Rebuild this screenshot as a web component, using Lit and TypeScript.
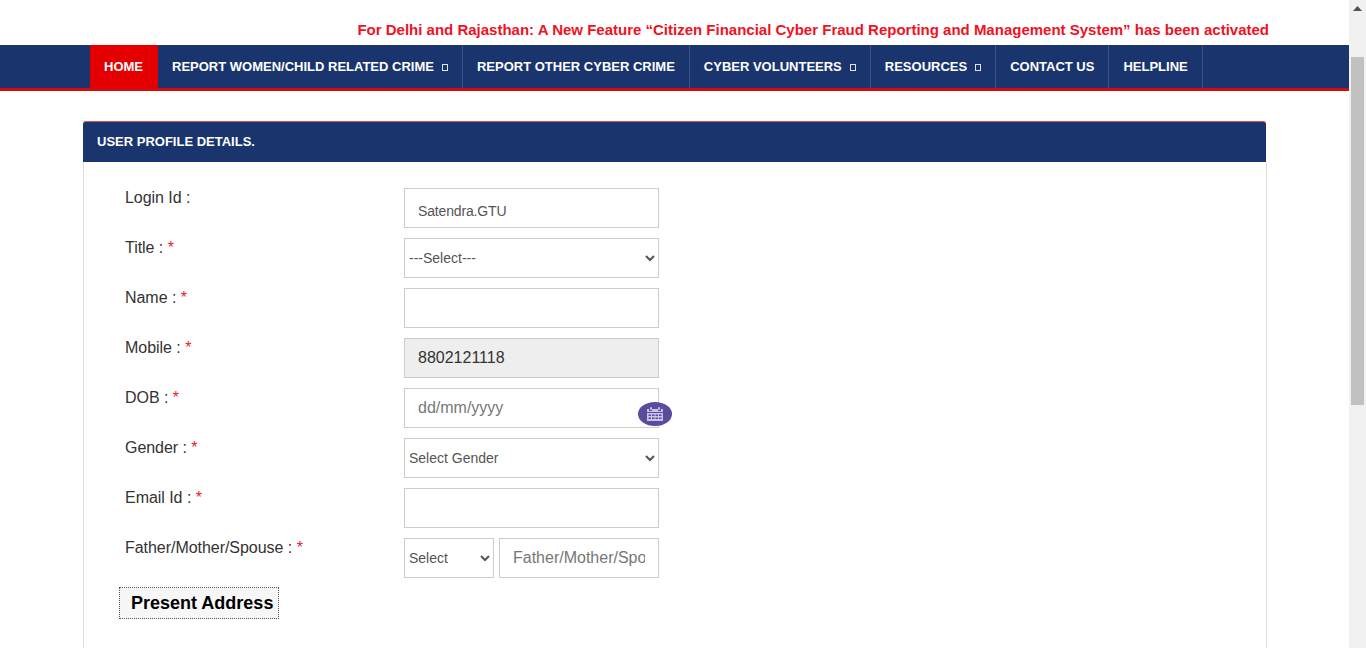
import { LitElement, html, css } from "lit";
import { customElement } from "lit/decorators.js";

const rows: { label: string; req: boolean; kind: string; value?: string; ph?: string }[] = [
  { label: "Login Id :", req: false, kind: "login", value: "Satendra.GTU" },
  { label: "Title :", req: true, kind: "select", value: "---Select---" },
  { label: "Name :", req: true, kind: "input" },
  { label: "Mobile :", req: true, kind: "disabled", value: "8802121118" },
  { label: "DOB :", req: true, kind: "date", ph: "dd/mm/yyyy" },
  { label: "Gender :", req: true, kind: "select", value: "Select Gender" },
  { label: "Email Id :", req: true, kind: "input" },
  { label: "Father/Mother/Spouse :", req: true, kind: "pair" },
];

const nav = [
  { t: "HOME", active: true },
  { t: "REPORT WOMEN/CHILD RELATED CRIME", caret: true },
  { t: "REPORT OTHER CYBER CRIME" },
  { t: "CYBER VOLUNTEERS", caret: true },
  { t: "RESOURCES", caret: true },
  { t: "CONTACT US" },
  { t: "HELPLINE" },
];

@customElement("app-root")
export class AppRoot extends LitElement {
  static styles = css`
    :host { display: flex; width: 1366px; height: 648px; overflow: hidden; background: #fff;
      font-family: "Liberation Sans", Arial, sans-serif; color: #333; }
    .page { width: 1349px; flex: none; }
    .scrollbar { width: 17px; flex: none; background: #f1f1f1; display: flex; flex-direction: column; align-items: center; }
    .arrow { height: 17px; width: 17px; display: flex; align-items: center; justify-content: center; }
    .thumb { width: 13px; height: 348px; margin-top: 40px; background: #c1c1c1; }
    .ticker { height: 45px; box-sizing: border-box; padding: 21px 80px 0 0; text-align: right;
      color: #f01124; font-size: 15px; line-height: 18px; font-weight: 700; white-space: nowrap; }
    nav { height: 43px; background: #1a356e; border-bottom: 3px solid #d10c14; padding-left: 90px; display: flex; }
    .item { display: flex; align-items: center; box-sizing: border-box; height: 43px; padding: 0 14px 1px;
      color: #fff; font-size: 13px; font-weight: 700; border-right: 1px solid #3d5482; white-space: nowrap; }
    .item.active { background: #e40000; border-right-color: #e40000; }
    .caret { display: inline-block; box-sizing: border-box; width: 6px; height: 7px; border: 1px solid #dfe4ee; margin-left: 8px; margin-top: 3px; }
    .panel { margin: 30px 0 0 83px; width: 1184px; }
    .head { width: 1183px; height: 41px; box-sizing: border-box; background: #1a356e; border-top: 1px solid #d9534f; border-radius: 3px 3px 0 0;
      display: flex; align-items: center; padding: 0 0 2px 14px; color: #fff; font-size: 13px; font-weight: 700; }
    .body { border: 1px solid #ddd; border-top: none; padding: 26px 0 0 35px; height: 500px; box-sizing: border-box; }
    .row { display: flex; height: 40px; margin-bottom: 10px; }
    .label { width: 285px; padding: 1px 0 0 6px; box-sizing: border-box; font-size: 16px; line-height: 18px; letter-spacing: -0.04px; color: #333; flex: none; }
    .req { color: #e8202a; }
    .ctl { position: relative; width: 255px; height: 40px; }
    input, select { box-sizing: border-box; width: 100%; height: 40px; margin: 0; border: 1px solid #ccc; background: #fff;
      border-radius: 0; font-family: inherit; color: #333; outline: none; }
    input { font-size: 16px; padding: 0 13px; }
    input::placeholder { color: #777; opacity: 1; }
    input.login { font-size: 14px; letter-spacing: -0.15px; padding-top: 6px; color: #555; }
    input.off { background: #eee; }
    select { font-size: 14px; color: #555; padding: 0; }
    .pair { display: flex; gap: 5px; }
    .pair select { width: 90px; flex: none; }
    .pair input { width: 160px; flex: none; }
    .cal { position: absolute; left: 234px; top: 14px; width: 34px; height: 24px; border-radius: 50%; background: #5b4a9e;
      display: flex; align-items: center; justify-content: center; }
    .legend { display: inline-block; box-sizing: border-box; width: 160px; height: 32px; margin: -1px 0 0 0; border: 1px dotted #555; background: #f7f7f7;
      padding-left: 11px; font-size: 18px; line-height: 30px; font-weight: 700; color: #000; }
  `;

  private control(r: (typeof rows)[number]) {
    switch (r.kind) {
      case "login":
        return html`<input class="login" .value=${r.value ?? ""} />`;
      case "select":
        return html`<select><option>${r.value}</option></select>`;
      case "disabled":
        return html`<input class="off" .value=${r.value ?? ""} readonly />`;
      case "date":
        return html`<input placeholder=${r.ph ?? ""} />
          <span class="cal">
            <svg width="18" height="14" viewBox="0 0 18 14" fill="#c9c3e6">
              <rect x="4" y="0" width="2" height="3" rx="1"></rect>
              <rect x="12" y="0" width="2" height="3" rx="1"></rect>
              <path d="M1 2h2v2h3V2h6v2h3V2h2v3H1z"></path>
              <path fill-rule="evenodd" d="M1 6h16v8H1zM2.500 7.500v1.500h2.500V7.500zM6 7.500v1.500h2.500V7.500zM9.500 7.500v1.500H12V7.500zM13 7.500v1.500h2.500V7.500zM2.500 10.500V12h2.500v-1.500zM6 10.500V12h2.500v-1.500zM9.500 10.500V12H12v-1.500zM13 10.500V12h2.500v-1.500z"></path>
            </svg>
          </span>`;
      case "pair":
        return html`<div class="pair"><select><option>Select</option></select><input placeholder="Father/Mother/Spouse" /></div>`;
      default:
        return html`<input />`;
    }
  }

  render() {
    return html`
      <div class="page">
        <div class="ticker">For Delhi and Rajasthan: A New Feature “Citizen Financial Cyber Fraud Reporting and Management System” has been activated</div>
        <nav>
          ${nav.map(
            (n) => html`<div class="item ${n.active ? "active" : ""}">${n.t}${n.caret ? html`<span class="caret"></span>` : ""}</div>`
          )}
        </nav>
        <section class="panel">
          <div class="head">USER PROFILE DETAILS.</div>
          <div class="body">
            ${rows.map(
              (r) => html`<div class="row">
                <div class="label">${r.label}${r.req ? html` <span class="req">*</span>` : ""}</div>
                <div class="ctl">${this.control(r)}</div>
              </div>`
            )}
            <div class="legend">Present Address</div>
          </div>
        </section>
      </div>
      <div class="scrollbar">
        <div class="arrow"><svg width="9" height="5" viewBox="0 0 9 5"><path d="M4.500 0L9 5H0z" fill="#505050"></path></svg></div>
        <div class="thumb"></div>
      </div>
    `;
  }
}
